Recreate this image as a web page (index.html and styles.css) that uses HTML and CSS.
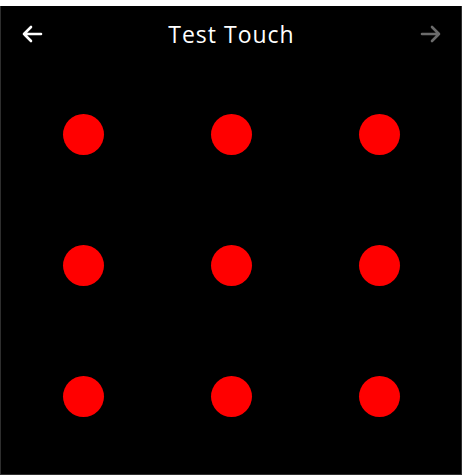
FILE: index.html
```html
<!DOCTYPE html>
<html>
<head>
<meta charset="utf-8">
<link rel="stylesheet" href="styles.css">
</head>
<body>
<div class="top-gap"></div>
<div class="panel">
  <header class="header">
    <svg class="arrow" viewBox="0 0 24 24" width="24" height="24"><path d="M21 12H4M11 5L4 12L11 19" fill="none" stroke="#ffffff" stroke-width="2.6" stroke-linecap="round" stroke-linejoin="round"/></svg>
    <h1 class="title">Test Touch</h1>
    <svg class="arrow" viewBox="0 0 24 24" width="24" height="24"><path d="M3 12H20M13 5L20 12L13 19" fill="none" stroke="#6b6b6b" stroke-width="2.6" stroke-linecap="round" stroke-linejoin="round"/></svg>
  </header>
  <div class="grid">
    <div class="cell"><span class="dot"></span></div>
    <div class="cell"><span class="dot"></span></div>
    <div class="cell"><span class="dot"></span></div>
    <div class="cell"><span class="dot"></span></div>
    <div class="cell"><span class="dot"></span></div>
    <div class="cell"><span class="dot"></span></div>
    <div class="cell"><span class="dot"></span></div>
    <div class="cell"><span class="dot"></span></div>
    <div class="cell"><span class="dot"></span></div>
  </div>
</div>
</body>
</html>
```
FILE: styles.css
```css
html, body {
  margin: 0;
  padding: 0;
  background: #ffffff;
  overflow: hidden;
}
.top-gap {
  height: 6px;
}
.panel {
  box-sizing: border-box;
  width: 462px;
  height: 469px;
  background: #000000;
  border-left: 1px solid #2e2e2e;
  border-right: 1px solid #2e2e2e;
  border-bottom: 1px solid #2e2e2e;
  display: flex;
  flex-direction: column;
}
.header {
  height: 56px;
  display: flex;
  align-items: center;
  justify-content: space-between;
  padding: 0 18px 0 19px;
}
.arrow {
  display: block;
}
.title {
  margin: 0;
  font-family: "Open Sans", "Liberation Sans", sans-serif;
  font-weight: 400;
  font-size: 23px;
  letter-spacing: 1px;
  color: #ffffff;
}
.grid {
  margin-top: 7px;
  display: grid;
  grid-template-columns: repeat(3, 148px);
  grid-template-rows: repeat(3, 131px);
  justify-content: center;
}
.cell {
  display: flex;
  align-items: center;
  justify-content: center;
}
.dot {
  width: 41px;
  height: 41px;
  border-radius: 50%;
  background: #ff0000;
}
```
